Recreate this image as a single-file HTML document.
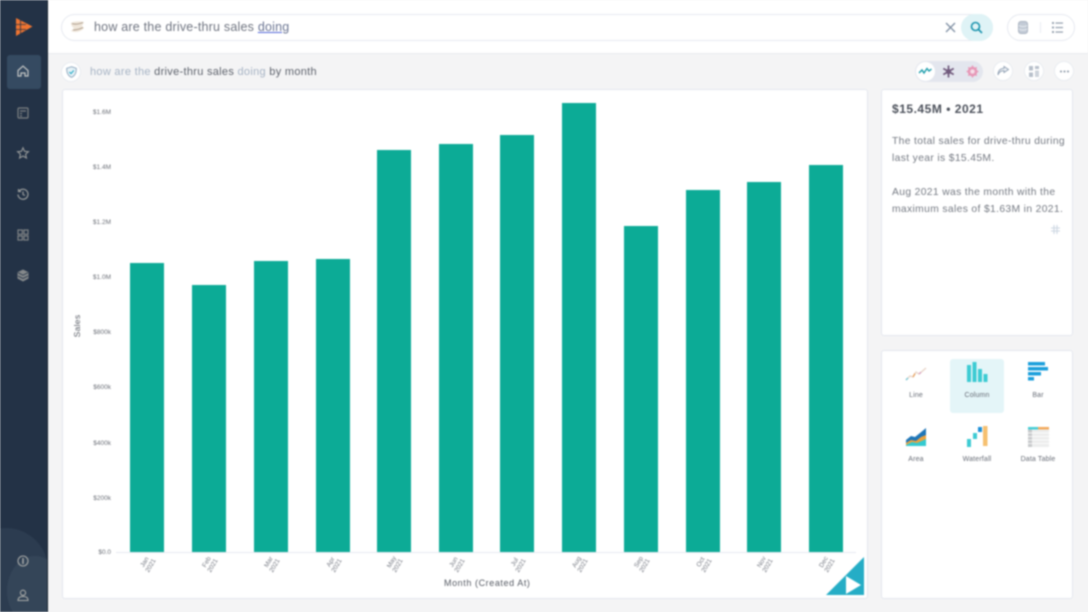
<!DOCTYPE html>
<html lang="en"><head><meta charset="utf-8"><title>Drive-thru sales</title>
<style>
*{box-sizing:border-box}
html,body{margin:0;padding:0;width:1088px;height:612px;overflow:hidden;background:#f4f4f5}
body{font-family:"Liberation Sans",sans-serif;position:relative}
#wrap{position:absolute;left:0;top:0;width:1088px;height:612px;filter:blur(.8px);overflow:hidden;background:#f4f4f5}
.a{position:absolute}
.t{position:absolute;white-space:nowrap}
.card{position:absolute;background:#fff;border:1px solid #e4e7ee;border-radius:3px}
.bar{position:absolute;width:34px;background:#0cab96;bottom:60px}
.yl{position:absolute;left:80px;width:31px;text-align:right;font-size:6.5px;color:#6c7078;line-height:8px}
.xl{position:absolute;top:557px;width:24px;text-align:center;font-size:6.5px;line-height:7px;color:#777b84;transform:rotate(-60deg)}
.ct{position:absolute;width:60px;text-align:center;font-size:7px;letter-spacing:.15px;color:#666b75}
.round{position:absolute;width:20px;height:20px;border-radius:50%;background:#fff;border:1px solid #e9ecf1}
svg{position:absolute;overflow:visible}
</style></head><body><div id="wrap">

<!-- Sidebar -->
<div class="a" style="left:0;top:0;width:47px;height:612px;background:#233246;overflow:hidden">
<div class="a" style="left:-36px;top:528px;width:84px;height:84px;border-radius:50%;background:#2c3c50"></div>
<div class="a" style="left:7px;top:556px;width:56px;height:70px;border-radius:50%;background:#344558"></div>
</div>
<div class="a" style="left:47px;top:0;width:1px;height:612px;background:#16222f"></div>
<div class="a" style="left:7px;top:55px;width:34px;height:34px;border-radius:3px;background:#354a61"></div>

<svg style="left:14px;top:17px" width="20" height="20" viewBox="0 0 20 20">
<path d="M2 1 L18.5 9.5 L2 19 Z" fill="#ee7431"/>
<path d="M6.5 3 V17 M2 7.5 L12 7.5 M2 12.5 L12 12.5" stroke="#233246" stroke-width=".8"/>
</svg>

<svg style="left:17px;top:65px" width="12" height="12" viewBox="0 0 12 12" fill="none" stroke="#c3c5c4" stroke-width="1.2"><path d="M1 5.5 L6 1 L11 5.5 V11 H8 V8 H4 V11 H1 Z"/></svg>
<svg style="left:17px;top:107px" width="12" height="12" viewBox="0 0 12 12" fill="none" stroke="#7c8082" stroke-width="1.2"><rect x="1" y="1" width="10" height="10" rx="1"/><path d="M3 4 H9 M3 6.5 H5 M3 9 H5" /></svg>
<svg style="left:17px;top:147px" width="12" height="12" viewBox="0 0 12 12" fill="none" stroke="#979a9a" stroke-width="1.1"><path d="M6 .8 L7.6 4.3 L11.4 4.7 L8.6 7.2 L9.4 11 L6 9 L2.6 11 L3.4 7.2 L.6 4.7 L4.4 4.3 Z"/></svg>
<svg style="left:17px;top:188px" width="12" height="12" viewBox="0 0 12 12" fill="none" stroke="#979a9a" stroke-width="1.2"><path d="M2.2 3 A5 5 0 1 1 1 6.5 M1.5 1 V3.5 H4 M6 3.5 V6.5 L8 7.5"/></svg>
<svg style="left:17px;top:229px" width="12" height="12" viewBox="0 0 12 12" fill="none" stroke="#7f8385" stroke-width="1.2"><rect x="1" y="1" width="4.3" height="4.3"/><rect x="7" y="1" width="4" height="4.3"/><rect x="1" y="7" width="4.3" height="4"/><rect x="7" y="7" width="4" height="4"/></svg>
<svg style="left:17px;top:269px" width="12" height="13" viewBox="0 0 12 13" fill="#85898b"><path d="M6 .5 L11.5 3.3 V9.5 L6 12.5 L.5 9.5 V3.3 Z"/><path d="M1 3.6 L6 6.2 L11 3.6 M1 7 L6 9.5 L11 7" fill="none" stroke="#233246" stroke-width=".8"/></svg>
<svg style="left:17px;top:555px" width="12" height="12" viewBox="0 0 12 12" fill="none" stroke="#a8aaa8" stroke-width="1.1"><circle cx="6" cy="6" r="5"/><path d="M6 3 V9" stroke-width="1.5"/></svg>
<svg style="left:17px;top:589px" width="12" height="13" viewBox="0 0 12 13" fill="none" stroke="#a8aaa8" stroke-width="1.1"><circle cx="6" cy="3.8" r="2.6"/><path d="M1 11.5 C1 8 3.5 7.5 6 7.5 S11 8 11 11.5 Z"/></svg>

<!-- Header -->
<div class="a" style="left:48px;top:0;width:1040px;height:54px;background:#fff;border-bottom:1px solid #e8eaee"></div>
<div class="a" style="left:61px;top:14px;width:932px;height:27px;border:1px solid #e6e9f0;border-radius:14px;background:#fff"></div>
<svg style="left:69px;top:20px" width="16" height="14" viewBox="0 0 16 14"><path d="M2 3 C5 1 11 1 15 2 L13 6 L15 8 C12 12 6 13 2 11 L5 8 C3 7 2 5 2 3 Z" fill="#efe6da"/><path d="M3 3.5 C6 5 10 4 14 2.5 M4 10 C7 10 11 9 14 7.5" fill="none" stroke="#a39282" stroke-width=".8"/></svg>
<div class="t" style="left:94px;top:20px;font-size:12.5px;letter-spacing:.21px;line-height:15px;color:#6f7480">how are the drive-thru sales <span style="color:#6c7693;text-decoration:underline;text-decoration-color:#5468d8">doing</span></div>
<svg style="left:945px;top:22px" width="11" height="11" viewBox="0 0 11 11"><path d="M1 1 L10 10 M10 1 L1 10" stroke="#7f8fa3" stroke-width="1.3"/></svg>
<div class="a" style="left:961px;top:14px;width:32px;height:27px;border-radius:14px;background:#dff3f6"></div>
<svg style="left:970px;top:21px" width="13" height="13" viewBox="0 0 13 13" fill="none" stroke="#1b93ad" stroke-width="1.6"><circle cx="5.5" cy="5.5" r="4"/><path d="M8.5 8.5 L12 12"/></svg>
<div class="a" style="left:1007px;top:14px;width:68px;height:27px;border:1px solid #e6e9f0;border-radius:14px;background:#fff"></div>
<svg style="left:1018px;top:21px" width="10" height="13" viewBox="0 0 10 13"><rect x=".5" y=".5" width="9" height="12" rx="2.5" fill="#c3cbd6" stroke="#a9b3c0"/><path d="M.8 4.5 C3 6 7 6 9.2 4.5 M.8 8 C3 9.5 7 9.5 9.2 8" fill="none" stroke="#e9edf2"/></svg>
<div class="a" style="left:1040px;top:22px;width:1px;height:11px;background:#e9edf2"></div>
<svg style="left:1052px;top:22px" width="11" height="11" viewBox="0 0 11 11" fill="#98a3b1"><rect y="0" width="2" height="2"/><rect x="3.5" y=".4" width="7.5" height="1.3"/><rect y="4.5" width="2" height="2"/><rect x="3.5" y="4.9" width="7.5" height="1.3"/><rect y="9" width="2" height="2"/><rect x="3.5" y="9.4" width="7.5" height="1.3"/></svg>

<!-- Subheader -->
<div class="round" style="left:61px;top:62px;background:#fff"></div>
<svg style="left:66px;top:66px" width="11" height="12" viewBox="0 0 11 12"><path d="M5.5 .7 L10.3 2.3 C10.5 7 8.5 10 5.5 11.4 C2.5 10 .5 7 .7 2.3 Z" fill="#e6f2f7" stroke="#8da6bd" stroke-width=".9"/><path d="M3.3 6 L5 7.6 L7.8 4.4" fill="none" stroke="#22a9c6" stroke-width="1.1"/></svg>
<div class="t" style="left:90px;top:66px;font-size:11px;letter-spacing:.3px;line-height:13px;color:#5e636d"><span style="color:#a6b3c4">how are the</span> drive-thru sales <span style="color:#a6b3c4">doing</span> by month</div>

<div class="a" style="left:915px;top:61px;width:68px;height:21px;border-radius:11px;background:#e3e6ee"></div>
<div class="a" style="left:916px;top:62px;width:19px;height:19px;border-radius:50%;background:#fff"></div>
<svg style="left:918px;top:66px" width="14" height="10" viewBox="0 0 14 10"><path d="M1 7 L4 4 L6 7 L9 2.5 L11 5 L13.5 3" fill="none" stroke="#1a9cab" stroke-width="1.4"/></svg>
<svg style="left:942px;top:65px" width="13" height="13" viewBox="0 0 13 13"><path d="M6.5 .5 V12.5 M1.3 3.5 L11.7 9.5 M11.7 3.5 L1.3 9.5" stroke="#715a7d" stroke-width="1.7"/><circle cx="6.5" cy="6.5" r="2.6" fill="#715a7d"/></svg>
<svg style="left:966px;top:65px" width="13" height="13" viewBox="0 0 13 13"><circle cx="6.5" cy="6.5" r="3.8" fill="none" stroke="#e795b5" stroke-width="2"/><path d="M6.5 .5 V12.5 M.5 6.5 H12.5 M2.3 2.3 L10.7 10.7 M10.7 2.3 L2.3 10.7" stroke="#e795b5" stroke-width="1.3"/><circle cx="6.5" cy="6.5" r="2" fill="#f8dfe9"/></svg>
<div class="round" style="left:993px;top:61px"></div>
<svg style="left:997px;top:66px" width="12" height="10" viewBox="0 0 12 10"><path d="M7 .5 L11.5 3.5 L7 6.5 V4.7 C4 4.7 2 6 1 9 C1 5 3 2.5 7 2.3 Z" fill="#eef1f5" stroke="#8b9cb0" stroke-width=".9"/></svg>
<div class="round" style="left:1024px;top:61px"></div>
<svg style="left:1029px;top:66px" width="10" height="11" viewBox="0 0 10 11" fill="#b7c0ca"><rect width="4" height="4.5"/><rect x="6" width="4" height="3"/><rect y="6.5" width="4" height="4.5"/><rect x="6" y="4.5" width="4" height="6.5" fill="#cdd3db"/></svg>
<div class="round" style="left:1054px;top:61px"></div>
<svg style="left:1060px;top:70px" width="9" height="3" viewBox="0 0 9 3" fill="#8a96a5"><circle cx="1" cy="1.5" r="1"/><circle cx="4.5" cy="1.5" r="1"/><circle cx="8" cy="1.5" r="1"/></svg>

<!-- Chart card -->
<div class="card" style="left:62px;top:89px;width:806px;height:510px"></div>
<div class="yl" style="top:108.5px">$1.6M</div>
<div class="yl" style="top:163.5px">$1.4M</div>
<div class="yl" style="top:218.5px">$1.2M</div>
<div class="yl" style="top:273.5px">$1.0M</div>
<div class="yl" style="top:328.5px">$800k</div>
<div class="yl" style="top:383.5px">$600k</div>
<div class="yl" style="top:439.5px">$400k</div>
<div class="yl" style="top:494.5px">$200k</div>
<div class="yl" style="top:549px">$0.0</div>
<div class="t" style="left:62px;top:321px;width:30px;text-align:center;font-size:8.5px;line-height:10px;letter-spacing:.3px;color:#555a63;transform:rotate(-90deg)">Sales</div>
<div class="a" style="left:116px;top:552px;width:740px;height:1px;background:#e6e8f0"></div>

<div class="bar" style="left:130px;top:263px;height:289px"></div>
<div class="bar" style="left:192px;top:285px;height:267px"></div>
<div class="bar" style="left:254px;top:261px;height:291px"></div>
<div class="bar" style="left:316px;top:259px;height:293px"></div>
<div class="bar" style="left:377px;top:150px;height:402px"></div>
<div class="bar" style="left:439px;top:144px;height:408px"></div>
<div class="bar" style="left:500px;top:135px;height:417px"></div>
<div class="bar" style="left:562px;top:103px;height:449px"></div>
<div class="bar" style="left:624px;top:226px;height:326px"></div>
<div class="bar" style="left:686px;top:190px;height:362px"></div>
<div class="bar" style="left:747px;top:182px;height:370px"></div>
<div class="bar" style="left:809px;top:165px;height:387px"></div>

<div class="xl" style="left:136px">Jan<br>2021</div>
<div class="xl" style="left:198px">Feb<br>2021</div>
<div class="xl" style="left:260px">Mar<br>2021</div>
<div class="xl" style="left:322px">Apr<br>2021</div>
<div class="xl" style="left:383px">May<br>2021</div>
<div class="xl" style="left:445px">Jun<br>2021</div>
<div class="xl" style="left:506px">Jul<br>2021</div>
<div class="xl" style="left:568px">Aug<br>2021</div>
<div class="xl" style="left:630px">Sep<br>2021</div>
<div class="xl" style="left:692px">Oct<br>2021</div>
<div class="xl" style="left:753px">Nov<br>2021</div>
<div class="xl" style="left:815px">Dec<br>2021</div>
<div class="t" style="left:444px;top:578px;font-size:9px;letter-spacing:.58px;line-height:11px;color:#555a63">Month (Created At)</div>

<svg style="left:826px;top:557px" width="38" height="38" viewBox="0 0 38 38"><path d="M38 0 V38 H0 Z" fill="#25adc6"/><path d="M20 19 L35 28 L20 37 Z" fill="#fff"/></svg>

<!-- Insight card -->
<div class="card" style="left:881px;top:89px;width:192px;height:247px"></div>
<div class="t" style="left:892px;top:102px;font-size:12px;letter-spacing:.52px;line-height:14px;font-weight:bold;color:#4c515b">$15.45M • 2021</div>
<div class="t" style="left:892px;top:133px;font-size:10.3px;letter-spacing:.36px;line-height:17px;color:#757a83">The total sales for drive-thru during<br>last year is $15.45M.<br><br>Aug 2021 was the month with the<br>maximum sales of $1.63M in 2021.</div>
<svg style="left:1051px;top:225px" width="9" height="9" viewBox="0 0 9 9"><path d="M3 0 V9 M6 0 V9 M0 3 H9 M0 6 H9" stroke="#ccd6e2" stroke-width="1.1"/></svg>

<!-- Chart type card -->
<div class="card" style="left:881px;top:350px;width:192px;height:249px"></div>
<div class="a" style="left:950px;top:359px;width:54px;height:54px;border-radius:3px;background:#e4f5f8"></div>

<svg style="left:905px;top:366px" width="22" height="16" viewBox="0 0 22 16"><path d="M1 14 L5 10 L8 11 L11 6 L14 8 L21 2" fill="none" stroke="#e9d5c8" stroke-width="1.3"/><path d="M1 14 L3 12" stroke="#76c8d8" stroke-width="1.3"/><path d="M8 11 L10 7.5" stroke="#e7a15e" stroke-width="1.3"/><path d="M14 8 L16 6.2" stroke="#d79cc0" stroke-width="1.3"/></svg>
<div class="ct" style="left:886px;top:392px">Line</div>

<svg style="left:967px;top:362px" width="21" height="20" viewBox="0 0 21 20" fill="#3dcbd3"><rect x="0" y="3" width="4" height="17"/><rect x="5.5" y="0" width="4" height="20"/><rect x="11" y="7" width="4" height="13"/><rect x="16.5" y="12" width="4" height="8"/></svg>
<div class="ct" style="left:947px;top:392px">Column</div>

<svg style="left:1028px;top:362px" width="21" height="21" viewBox="0 0 21 21" fill="#1c9fdc"><rect width="17" height="3.5"/><rect y="5" width="20" height="3.5"/><rect y="10" width="13" height="3.5"/><rect y="15" width="6" height="3.5"/></svg>
<div class="ct" style="left:1008px;top:392px">Bar</div>

<svg style="left:905px;top:427px" width="22" height="20" viewBox="0 0 22 20"><path d="M1 13 L6 9 L10 10 L15 6 L21 1 V19 H1 Z" fill="#1f76b8"/><path d="M1 16 L6 13 L11 14 L16 10 L21 8 V19 H1 Z" fill="#eda23e"/><path d="M1 18 L7 15 L12 16 L21 12 V19 H1 Z" fill="#33cad0"/></svg>
<div class="ct" style="left:886px;top:456px">Area</div>

<svg style="left:967px;top:426px" width="21" height="21" viewBox="0 0 21 21"><rect x="0" y="13" width="4" height="8" fill="#3dcbd3"/><rect x="6" y="7" width="4" height="6" fill="#3dcbd3"/><rect x="11" y="1" width="4" height="5" fill="#1c8fd8"/><rect x="16" y="0" width="4.5" height="20" fill="#f6c070"/></svg>
<div class="ct" style="left:947px;top:456px">Waterfall</div>

<svg style="left:1028px;top:427px" width="21" height="20" viewBox="0 0 21 20"><rect width="10" height="2.5" fill="#45cdd6"/><rect x="10" width="11" height="2.5" fill="#f2a95b"/><rect y="2.5" width="4" height="17.5" fill="#c7c9cb"/><rect x="4" y="2.5" width="17" height="17.5" fill="#eceded"/><path d="M0 6 H21 M0 9.5 H21 M0 13 H21 M0 16.5 H21" stroke="#fff" stroke-width=".8"/></svg>
<div class="ct" style="left:1008px;top:456px">Data Table</div>

</div></body></html>
